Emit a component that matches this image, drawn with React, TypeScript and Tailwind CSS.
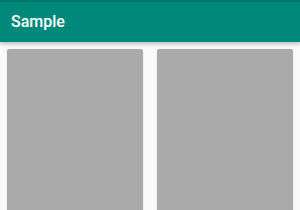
import React from "react";

const cards = [0, 1];

export default function App() {
  return (
    <div className="h-[210px] w-[300px] overflow-hidden bg-[#fafafa] font-['Roboto',sans-serif]">
      <div className="relative z-10 flex h-[42px] items-center border-t-2 border-[#00796b] bg-[#00897b] px-[11px] shadow-[0_2px_4px_rgba(0,0,0,0.25)]">
        <span className="text-[16px] font-medium leading-none text-white">Sample</span>
      </div>
      <div className="grid grid-cols-2 gap-[14px] px-[7px] pt-[7px]">
        {cards.map((c) => (
          <div
            key={c}
            className="h-[200px] rounded-[2px] bg-[#aaaaaa] shadow-[0_1px_2px_rgba(0,0,0,0.12)]"
          />
        ))}
      </div>
    </div>
  );
}
